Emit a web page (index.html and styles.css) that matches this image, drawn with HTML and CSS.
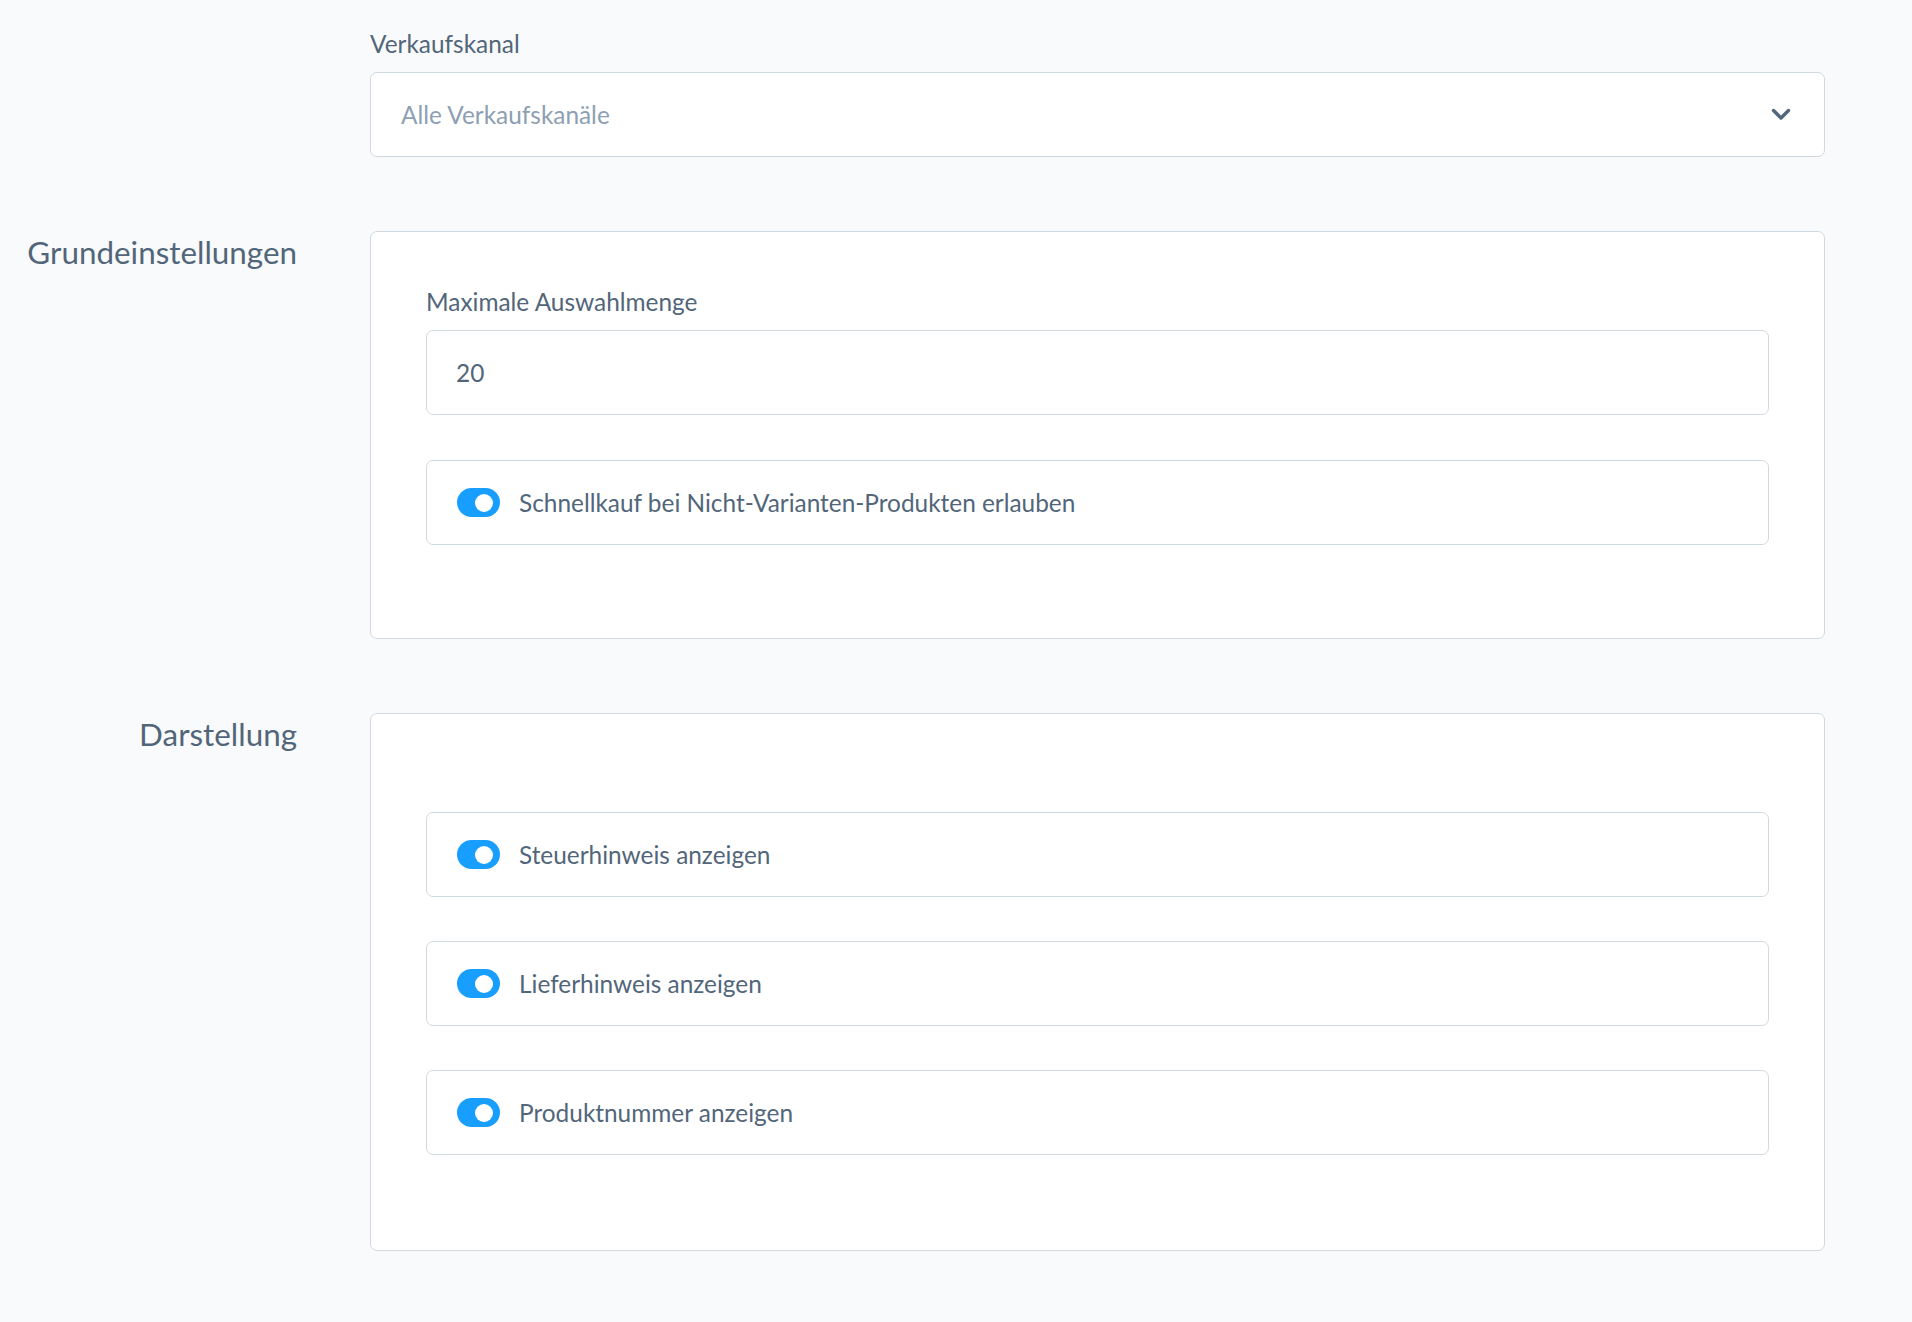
FILE: index.html
```html
<!DOCTYPE html>
<html lang="de">
<head>
    <meta charset="UTF-8">
    <title>Einstellungen</title>
    <link rel="stylesheet" href="styles.css">
</head>
<body>
    <div class="settings">
        <div class="row">
            <div class="row-title"></div>
            <div class="row-body">
                <label class="field-label">Verkaufskanal</label>
                <div class="select">
                    <span class="placeholder">Alle Verkaufskanäle</span>
                    <svg class="chevron" width="20" height="13" viewBox="0 0 20 13">
                        <path d="M2.5 2.5 L10 10 L17.5 2.5" fill="none" stroke="#52667a" stroke-width="3.4" stroke-linecap="round" stroke-linejoin="round"/>
                    </svg>
                </div>
            </div>
        </div>

        <div class="row section">
            <h2 class="row-title">Grundeinstellungen</h2>
            <div class="row-body card">
                <label class="field-label">Maximale Auswahlmenge</label>
                <div class="input">20</div>
                <div class="switch-field">
                    <span class="switch"><span class="knob"></span></span>
                    <span class="switch-label">Schnellkauf bei Nicht-Varianten-Produkten erlauben</span>
                </div>
            </div>
        </div>

        <div class="row section">
            <h2 class="row-title">Darstellung</h2>
            <div class="row-body card card-list">
                <div class="switch-field">
                    <span class="switch"><span class="knob"></span></span>
                    <span class="switch-label">Steuerhinweis anzeigen</span>
                </div>
                <div class="switch-field">
                    <span class="switch"><span class="knob"></span></span>
                    <span class="switch-label">Lieferhinweis anzeigen</span>
                </div>
                <div class="switch-field">
                    <span class="switch"><span class="knob"></span></span>
                    <span class="switch-label">Produktnummer anzeigen</span>
                </div>
            </div>
        </div>
    </div>
</body>
</html>
```

FILE: styles.css
```css
body {
    margin: 0;
    background-color: #f9fafb;
    font-family: 'Lato', 'Liberation Sans', sans-serif;
    color: #52667a;
}

.settings {
    padding-top: 29px;
    padding-bottom: 70px;
}

.row {
    display: grid;
    grid-template-columns: 297px 1455px;
    column-gap: 73px;
}

.section {
    margin-top: 74px;
}

.row-title {
    margin: 0;
    padding-top: 1px;
    text-align: right;
    font-size: 31.4px;
    font-weight: normal;
    line-height: 40px;
}

.field-label {
    display: block;
    font-size: 24.4px;
    line-height: 30px;
    margin-bottom: 13px;
}

.select,
.input,
.switch-field {
    box-sizing: border-box;
    height: 85px;
    background-color: #fff;
    border: 1px solid #d1d9e0;
    border-radius: 7px;
    display: flex;
    align-items: center;
    font-size: 24.4px;
}

.select {
    padding: 0 33px 0 30px;
    justify-content: space-between;
}

.placeholder {
    color: #8d9fb2;
}

.input {
    padding-left: 29px;
}

.card {
    box-sizing: border-box;
    min-height: 408px;
    background-color: #fff;
    border: 1px solid #d1d9e0;
    border-radius: 7px;
    padding: 55px 55px 93px;
}

.card .input {
    margin-bottom: 45px;
}

.card-list {
    padding-top: 98px;
    padding-bottom: 95px;
    display: flex;
    flex-direction: column;
    gap: 44px;
}

.switch-field {
    padding-left: 30px;
    gap: 19px;
}

.switch {
    position: relative;
    width: 43px;
    height: 29px;
    border-radius: 15px;
    background-color: #189eff;
    flex-shrink: 0;
}

.knob {
    position: absolute;
    right: 7px;
    top: 5.5px;
    width: 18px;
    height: 18px;
    border-radius: 50%;
    background-color: #fff;
}
```
